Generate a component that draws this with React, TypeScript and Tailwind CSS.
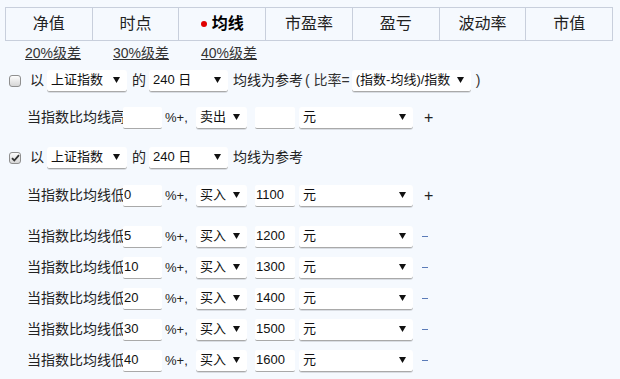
import React from "react";

const tabs = ["净值", "时点", "均线", "市盈率", "盈亏", "波动率", "市值"];
const levels = [
  { pct: "5", amount: "1200" },
  { pct: "10", amount: "1300" },
  { pct: "20", amount: "1400" },
  { pct: "30", amount: "1500" },
  { pct: "40", amount: "1600" },
];

const Arrow = () => (
  <svg width="7" height="6" viewBox="0 0 7 6" className="shrink-0">
    <path d="M0 0h7L3.5 6z" fill="#111" />
  </svg>
);

const Select = ({ value, width }: { value: string; width: string }) => (
  <div
    className={`${width} h-[22px] flex items-center justify-between pl-[4px] pr-[7px] bg-white rounded-[3px] border-b border-[#a9a9a9] shadow-[0_1px_0_#d9dde3] text-[13px] text-[#111] whitespace-nowrap`}
  >
    <span>{value}</span>
    <Arrow />
  </div>
);

const Field = ({ value, width }: { value: string; width: string }) => (
  <div
    className={`${width} h-[22px] flex items-center pl-[1px] bg-white rounded-[2px] border-b border-[#a9a9a9] text-[13px] text-[#111]`}
  >
    {value}
  </div>
);

const Check = ({ checked }: { checked?: boolean }) => (
  <span className="w-[12px] h-[12px] flex items-center justify-center rounded-[3px] border border-[#8f8f8f] bg-gradient-to-b from-[#fdfdfd] to-[#d6d6d6]">
    {checked && (
      <svg width="9" height="8" viewBox="0 0 9 8">
        <path d="M1 4.2l2.3 2.3L8 1.2" stroke="#333" strokeWidth="1.8" fill="none" />
      </svg>
    )}
  </span>
);

const RefRow = ({ checked, ratio }: { checked?: boolean; ratio?: boolean }) => (
  <div className="h-[31px] flex items-center pl-[9px]">
    <Check checked={checked} />
    <span className="ml-[9px] w-[17px]">以</span>
    <Select value="上证指数" width="w-[80px]" />
    <span className="ml-[5px] w-[17px]">的</span>
    <Select value="240 日" width="w-[79px]" />
    <span className="ml-[5px] whitespace-nowrap">均线为参考</span>
    {ratio && (
      <>
        <span className="ml-[2px] mr-[2px] whitespace-nowrap text-[#333]">
          ( 比率=
        </span>
        <Select value="(指数-均线)/指数" width="w-[119px]" />
        <span className="ml-[5px] text-[#333]">)</span>
      </>
    )}
  </div>
);

const RuleRow = ({
  dir,
  pct,
  action,
  amount,
  plus,
}: {
  dir: string;
  pct: string;
  action: string;
  amount: string;
  plus?: boolean;
}) => (
  <div className="h-[31px] flex items-center pl-[27px]">
    <span className="w-[96px] whitespace-nowrap">当指数比均线{dir}</span>
    <Field value={pct} width="w-[39px]" />
    <span className="ml-[3px] w-[31px] whitespace-nowrap text-[13px]">%+,</span>
    <Select value={action} width="w-[51px]" />
    <span className="w-[8px]" />
    <Field value={amount} width="w-[40px]" />
    <span className="w-[4px]" />
    <Select value="元" width="w-[114px]" />
    {plus ? (
      <span className="ml-[11px] text-[16px] leading-none text-[#222]">+</span>
    ) : (
      <span className="ml-[9px] w-[6px] h-[1px] bg-[#5b7bb8]" />
    )}
  </div>
);

export default function App() {
  return (
    <div className="w-[620px] h-[379px] overflow-hidden bg-[#f5f9fe] text-[14px] text-[#222] font-['Liberation_Sans','Noto_Sans_CJK_SC',sans-serif]">
      <div className="ml-[5px] mt-[7px] w-[608px] h-[34px] flex border border-[#c8cfdc]">
        {tabs.map((t, i) => (
          <div
            key={t}
            className={`flex-1 flex items-center justify-center text-[16px] ${
              i > 0 ? "border-l border-[#c8cfdc]" : ""
            } ${t === "均线" ? "font-bold text-black" : "text-[#222]"}`}
          >
            {t === "均线" && <span className="w-[6px] h-[6px] rounded-full bg-[#e00000] mr-[5px]" />}
            {t}
          </div>
        ))}
      </div>
      <div className="h-[24px] flex items-center pl-[25px] text-[14px] text-[#333]">
        {["20%级差", "30%级差", "40%级差"].map((l) => (
          <a key={l} className="w-[88px] underline leading-none">
            {l}
          </a>
        ))}
      </div>
      <RefRow ratio />
      <div className="mt-[6px]">
        <RuleRow dir="高" pct="" action="卖出" amount="" plus />
      </div>
      <div className="mt-[9px]">
        <RefRow checked />
      </div>
      <div className="mt-[7px]">
        <RuleRow dir="低" pct="0" action="买入" amount="1100" plus />
      </div>
      <div className="mt-[10px]">
        {levels.map((l) => (
          <RuleRow key={l.pct} dir="低" pct={l.pct} action="买入" amount={l.amount} />
        ))}
      </div>
    </div>
  );
}
